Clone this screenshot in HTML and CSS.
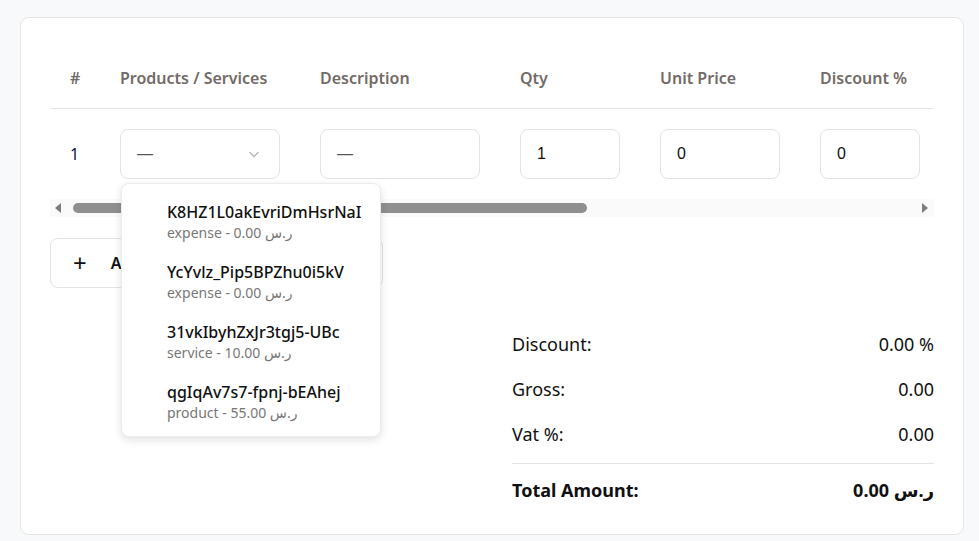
FILE: index.html
```html
<!DOCTYPE html>
<html lang="en">
<head>
<meta charset="utf-8">
<title>Invoice lines</title>
<link rel="stylesheet" href="styles.css">
</head>
<body>
<div class="card">
  <div class="table-scroll">
    <table class="lines">
      <colgroup>
        <col class="c-num"><col class="c-prod"><col class="c-desc"><col class="c-qty"><col class="c-price"><col class="c-disc"><col class="c-vat"><col class="c-total"><col class="c-act">
      </colgroup>
      <thead>
        <tr>
          <th>#</th>
          <th>Products / Services</th>
          <th>Description</th>
          <th>Qty</th>
          <th>Unit Price</th>
          <th>Discount %</th>
          <th>Vat %</th>
          <th>Total</th>
          <th>Actions</th>
        </tr>
      </thead>
      <tbody>
        <tr>
          <td>1</td>
          <td><div class="field select w160"><span class="placeholder">—</span>
            <svg class="chev" width="14" height="14" viewBox="0 0 14 14"><path d="M2.5 5 L7 9.5 L11.5 5" fill="none" stroke="#b5b5b5" stroke-width="1.3"/></svg></div></td>
          <td><div class="field w160"><span class="placeholder">—</span></div></td>
          <td><div class="field w100">1</div></td>
          <td><div class="field w120">0</div></td>
          <td><div class="field w100">0</div></td>
          <td><div class="field w100">0</div></td>
          <td><div class="field w120">0.00</div></td>
          <td></td>
        </tr>
      </tbody>
    </table>
  </div>
  <div class="hscroll" aria-hidden="true">
    <span class="arrow left"></span>
    <div class="rail"><span class="thumb"></span></div>
    <span class="arrow right"></span>
  </div>

  <button class="add-btn"><span class="plus">+</span><span>Add Product / Service</span></button>

  <div class="totals">
    <div class="t-row"><span>Discount:</span><span>0.00 %</span></div>
    <div class="t-row"><span>Gross:</span><span>0.00</span></div>
    <div class="t-row"><span>Vat %:</span><span>0.00</span></div>
    <div class="t-row total"><span>Total Amount:</span><span>0.00 ر.س</span></div>
  </div>

  <ul class="dropdown">
    <li><div class="d-title">K8HZ1L0akEvriDmHsrNaI</div><div class="d-sub">expense - 0.00 ر.س</div></li>
    <li><div class="d-title">YcYvlz_Pip5BPZhu0i5kV</div><div class="d-sub">expense - 0.00 ر.س</div></li>
    <li><div class="d-title">31vkIbyhZxJr3tgj5-UBc</div><div class="d-sub">service - 10.00 ر.س</div></li>
    <li><div class="d-title">qgIqAv7s7-fpnj-bEAhej</div><div class="d-sub">product - 55.00 ر.س</div></li>
  </ul>
</div>
</body>
</html>
```
FILE: styles.css
```css
* { box-sizing: border-box; }
html, body { margin: 0; }
body {
  background: #f8f9fb;
  font-family: "Noto Sans", "DejaVu Sans", sans-serif;
  color: #111;
  padding: 17px 15px 0 20px;
  height: 541px;
  overflow: hidden;
}
.card {
  position: relative;
  background: #fff;
  border: 1px solid #e4e4e4;
  border-radius: 9px;
  padding: 29px 29px 0 29px;
  height: 518px;
}
.table-scroll {
  overflow: hidden;
}
.lines {
  border-collapse: collapse;
  table-layout: fixed;
  width: 1472px;
  font-size: 16px;
}
.c-num { width: 50px; }
.c-prod { width: 200px; }
.c-desc { width: 200px; }
.c-qty { width: 140px; }
.c-price { width: 160px; }
.c-disc { width: 140px; }
.c-vat { width: 140px; }
.c-total { width: 180px; }
.c-act { width: 262px; }
.lines th {
  text-align: left;
  font-weight: 600;
  color: #736b67;
  padding: 21px 20px 19px;
  line-height: 21px;
  border-bottom: 1px solid #e6e6e6;
  white-space: nowrap;
}
.lines td {
  padding: 20px;
  vertical-align: middle;
  color: #0b1530;
}
.field {
  height: 50px;
  border: 1px solid #e3e3e3;
  border-radius: 8px;
  display: flex;
  align-items: center;
  padding: 0 16px;
  font-size: 16px;
  color: #111;
  font-family: "Liberation Sans", Arial, sans-serif;
}
.field.select { justify-content: space-between; }
.placeholder { color: #555; }
.w160 { width: 160px; }
.w120 { width: 120px; }
.w100 { width: 100px; }
.chev { margin-right: 2px; }

.hscroll {
  display: flex;
  align-items: center;
  height: 18px;
  background: #fafafa;
  padding: 0 6px 0 5px;
}
.arrow {
  width: 0;
  height: 0;
  border-top: 5px solid transparent;
  border-bottom: 5px solid transparent;
}
.arrow.left { border-right: 6px solid #7d7d7d; }
.arrow.right { border-left: 6px solid #7d7d7d; }
.rail {
  flex: 1;
  padding: 0 7px 0 12px;
}
.thumb {
  display: block;
  width: 514px;
  height: 10px;
  border-radius: 5px;
  background: #8f8f8f;
}

.add-btn {
  display: flex;
  align-items: center;
  gap: 24px;
  margin-top: 21px;
  height: 50px;
  width: 333px;
  padding: 0 22px;
  background: #fff;
  border: 1px solid #e3e3e3;
  border-radius: 8px;
  font-family: inherit;
  font-size: 16px;
  font-weight: 600;
  color: #111;
}
.plus { font-size: 24px; font-weight: 400; line-height: 1; }

.totals {
  width: 422px;
  margin: 33px 0 0 auto;
  font-size: 18px;
}
.t-row {
  display: flex;
  justify-content: space-between;
  height: 45px;
  align-items: center;
}
.t-row.total {
  border-top: 1px solid #e3e3e3;
  margin-top: 7px;
  height: 52px;
  font-weight: 700;
}

.dropdown {
  position: absolute;
  left: 100px;
  top: 165px;
  width: 260px;
  margin: 0;
  padding: 6px 0;
  list-style: none;
  background: #fff;
  border: 1px solid #ececec;
  border-radius: 8px;
  box-shadow: 0 3px 8px rgba(0,0,0,0.12);
}
.dropdown li {
  height: 60px;
  padding: 11px 0 0 45px;
}
.d-title { font-size: 16px; font-weight: 500; line-height: 22px; color: #111; }
.d-sub { font-size: 14px; line-height: 20px; color: #777; }
```
